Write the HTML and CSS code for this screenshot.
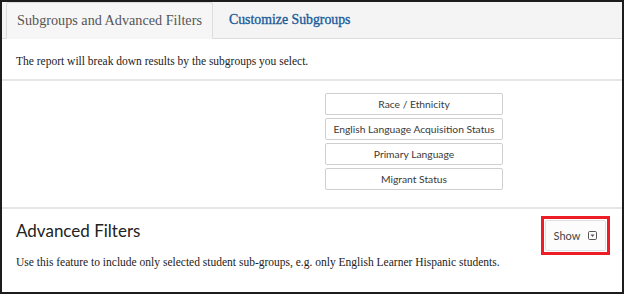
FILE: index.html
```html
<!DOCTYPE html>
<html>
<head>
<meta charset="utf-8">
<link rel="stylesheet" href="styles.css">
</head>
<body>
<div class="frame">
  <div class="tabs">
    <div class="tab active">Subgroups and Advanced Filters</div>
    <div class="tab link">Customize Subgroups</div>
  </div>
  <div class="panel">
    <p class="intro">The report will break down results by the subgroups you select.</p>
    <div class="groups">
      <button class="grp">Race / Ethnicity</button>
      <button class="grp">English Language Acquisition Status</button>
      <button class="grp">Primary Language</button>
      <button class="grp">Migrant Status</button>
    </div>
    <div class="adv">
      <div class="adv-head">
        <h2>Advanced Filters</h2>
        <div class="highlight">
          <button class="show">Show
            <svg class="ico" width="9" height="9" viewBox="0 0 9 9"><rect x="0.5" y="0.5" width="8" height="8" rx="1.2" fill="none" stroke="#555" stroke-width="1"/><path d="M2.5 3.5 L6.5 3.5 L4.5 6 Z" fill="#555"/></svg>
          </button>
        </div>
      </div>
      <p class="desc">Use this feature to include only selected student sub-groups, e.g. only English Learner Hispanic students.</p>
    </div>
  </div>
</div>
</body>
</html>
```
FILE: styles.css
```css
* { box-sizing: border-box; }
html, body { margin: 0; padding: 0; background: #fff; }
.frame {
  width: 624px;
  height: 294px;
  border: 2px solid #1c1c1c;
  background: #fff;
  display: flex;
  flex-direction: column;
  overflow: hidden;
}
.tabs {
  background: #f4f4f4;
  display: flex;
  align-items: flex-end;
  padding: 1px 0 0 4px;
  height: 37px;
  border-bottom: 1px solid #dcdcdc;
}
.tab {
  font-family: "Liberation Serif", serif;
  font-size: 14.2px;
  height: 36px;
  display: flex;
  align-items: center;
  white-space: nowrap;
  padding: 0 12px;
}
.tab.active {
  color: #555;
  background: #f6f6f6;
  border: 1px solid #dcdcdc;
  border-bottom-color: #f6f6f6;
  border-radius: 3px 3px 0 0;
  margin-bottom: -1px;
  height: 37px;
  width: 207px;
  justify-content: center;
  padding: 0;
}
.tab.link {
  color: #1b5c9b;
  font-size: 13.8px;
  -webkit-text-stroke: 0.35px #1b5c9b;
  padding-left: 16px;
}
.panel {
  flex: 1;
  display: flex;
  flex-direction: column;
}
.intro {
  font-family: "Liberation Serif", serif;
  font-size: 11.5px;
  color: #222;
  margin: 0;
  padding: 14px 14px 10px 14px;
  border-bottom: 2px solid #e6e6e6;
  line-height: 16px;
}
.groups {
  display: flex;
  flex-direction: column;
  gap: 3px;
  padding: 12px 0 17px 323px;
  border-bottom: 2px solid #e6e6e6;
}
.grp {
  width: 178px;
  height: 22px;
  background: #fff;
  border: 1px solid #cfcfcf;
  border-radius: 2px;
  font-family: Lato, sans-serif;
  font-size: 10.3px;
  color: #3a3a3a;
  padding: 0;
}
.adv {
  padding: 7px 12px 0 14px;
}
.adv-head {
  display: flex;
  justify-content: space-between;
  align-items: flex-start;
}
.adv-head h2 {
  margin: 5px 0 0 0;
  font-family: Lato, sans-serif;
  font-weight: normal;
  font-size: 17px;
  line-height: 20px;
  color: #222;
}
.highlight {
  border: 3px solid #ee1c24;
  padding: 1px;
}
.show {
  width: 61px;
  height: 31px;
  background: #fcfcfc;
  border: 1px solid #dde0e4;
  border-radius: 2px;
  font-family: Lato, sans-serif;
  font-size: 11px;
  color: #444;
  display: flex;
  align-items: center;
  justify-content: center;
  gap: 8px;
  padding: 0;
}
.ico { display: block; }
.desc {
  font-family: "Liberation Serif", serif;
  font-size: 11.5px;
  line-height: 14px;
  color: #222;
  margin: 0;
}
```
